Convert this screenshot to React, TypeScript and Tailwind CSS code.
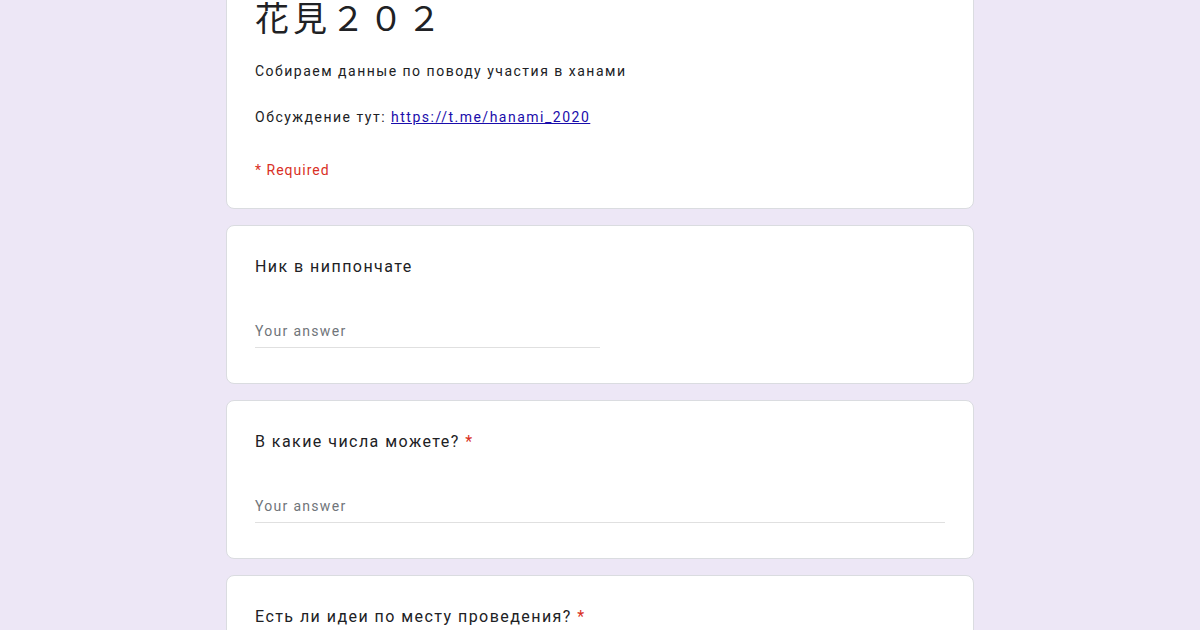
const font = "font-['Roboto','Noto_Sans_CJK_JP',sans-serif]";

function Question({ title, required, short }: { title: string; required?: boolean; short?: boolean }) {
  return (
    <div className="bg-white rounded-lg border border-[#dadce0] px-[28px] pt-[29px] pb-[35px]">
      <div className="text-[16px] leading-[24px] text-[#202124] tracking-[1.45px]">
        {title}
        {required && <span className="text-[#d93025]"> *</span>}
      </div>
      <div className={`mt-[42px] border-b border-[#e0e0e0] pb-[6px] ${short ? "w-[345px]" : "w-full"}`}>
        <div className="text-[14px] leading-[20px] text-[#70757a] tracking-[1.3px]">Your answer</div>
      </div>
    </div>
  );
}

export default function App() {
  return (
    <div className={`min-h-screen bg-[#ede7f6] ${font} overflow-hidden h-[630px]`}>
      <div className="w-[748px] mx-auto -mt-[27px] flex flex-col gap-[16px]">
        <div className="bg-white rounded-lg border border-[#dadce0] px-[28px] pt-[23px] pb-[28px]">
          <h1 className="text-[34px] leading-[40px] text-[#202124] tracking-[4px] font-['Noto_Sans_CJK_JP',sans-serif]">花見２０２</h1>
          <p className="mt-[24px] text-[14px] leading-[20px] text-[#202124] tracking-[1.5px]">Собираем данные по поводу участия в ханами</p>
          <p className="mt-[26px] text-[14px] leading-[20px] text-[#202124] tracking-[1.5px]">
            Обсуждение тут:{" "}
            <a href="#" className="text-[#1a0dab] underline">https://t.me/hanami_2020</a>
          </p>
          <p className="mt-[33px] text-[14px] leading-[20px] text-[#d93025] tracking-[1px]">* Required</p>
        </div>
        <Question title="Ник в ниппончате" short />
        <Question title="В какие числа можете?" required />
        <Question title="Есть ли идеи по месту проведения?" required />
      </div>
    </div>
  );
}
